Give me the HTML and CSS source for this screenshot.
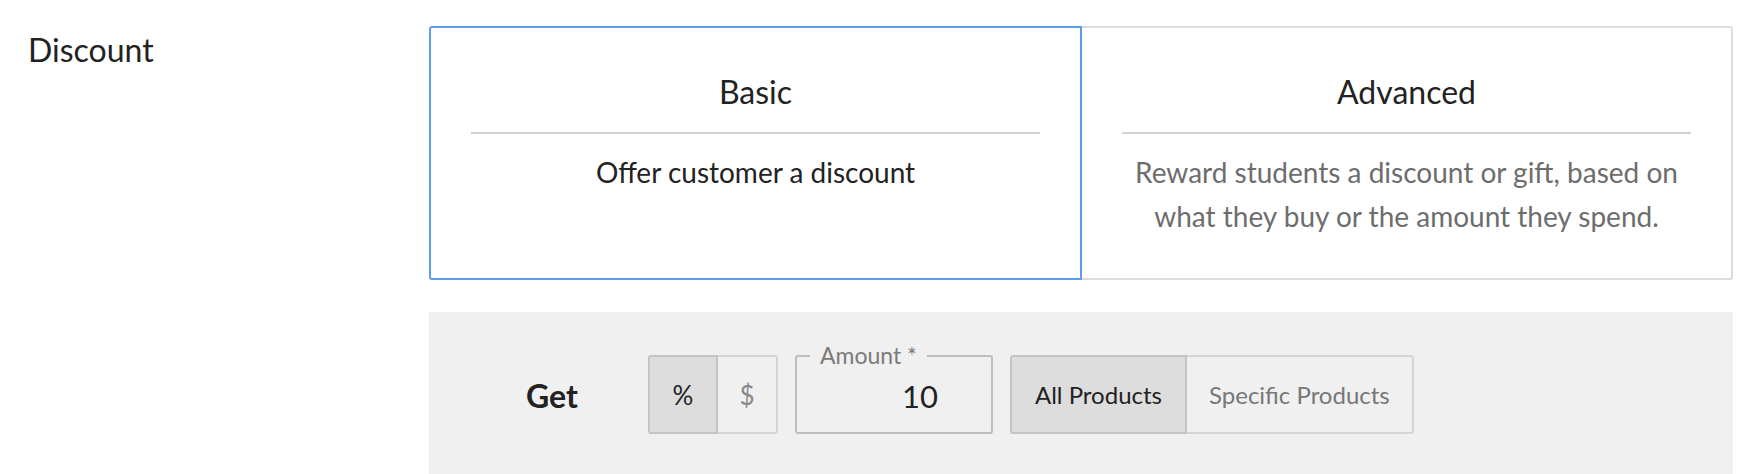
FILE: index.html
```html
<!DOCTYPE html>
<html lang="en">
<head>
<meta charset="UTF-8">
<meta name="viewport" content="width=device-width, initial-scale=1.0">
<title>Discount</title>
<link rel="stylesheet" href="styles.css">
</head>
<body>
    <div class="field-row">
        <div class="field-label">Discount</div>
        <div class="field-body">

            <!-- Discount type -->
            <div class="options">
                <div class="option selected">
                    <div class="option-title">Basic</div>
                    <div class="option-rule"></div>
                    <div class="option-desc">Offer customer a discount</div>
                </div>
                <div class="option">
                    <div class="option-title">Advanced</div>
                    <div class="option-rule"></div>
                    <div class="option-desc">Reward students a discount or gift, based on what they buy or the amount they spend.</div>
                </div>
            </div>

            <!-- Basic rule -->
            <div class="rule-panel">
                <span class="get">Get</span>
                <div class="toggle unit-toggle">
                    <button type="button" class="toggle-btn pct active">%</button>
                    <button type="button" class="toggle-btn usd">$</button>
                </div>
                <div class="amount">
                    <label for="amount">Amount *</label>
                    <input type="text" id="amount" value="10">
                </div>
                <div class="toggle scope-toggle">
                    <button type="button" class="toggle-btn active">All Products</button>
                    <button type="button" class="toggle-btn specific">Specific Products</button>
                </div>
            </div>

        </div>
    </div>
</body>
</html>
```

FILE: styles.css
```css
body {
    font-family: Lato, 'Open Sans', sans-serif;
    background-color: #fff;
    margin: 0;
    color: #222;
}

.field-row {
    display: flex;
    padding: 26px 29px 0 28px;
}

.field-label {
    width: 401px;
    flex-shrink: 0;
    padding-top: 5px;
    font-size: 32px;
    line-height: 38px;
    color: #222;
}

.field-body {
    flex: 1;
}

/* discount type cards */
.options {
    display: flex;
    margin-bottom: 32px;
}

.option {
    flex: 1 1 0;
    padding: 45px 40px 40px;
    border: 2px solid #dcdcdc;
    text-align: center;
    background-color: #fff;
}

.option:first-child {
    border-radius: 3px 0 0 3px;
}

.option:last-child {
    border-radius: 0 3px 3px 0;
}

.option + .option {
    border-left: none;
}

.option.selected {
    border-color: #5c9ded;
}

.option-title {
    font-size: 32px;
    line-height: 38px;
    color: #222;
    margin-bottom: 21px;
}

.option-rule {
    height: 2px;
    background-color: #d3d3d3;
    margin-bottom: 16px;
}

.option-desc {
    font-size: 28px;
    line-height: 44px;
    color: #6d6d6d;
}

.option.selected .option-desc {
    color: #222;
}

/* rule panel */
.rule-panel {
    display: flex;
    align-items: center;
    gap: 17px;
    background-color: #f0f0f0;
    padding: 43px 0 42px 97px;
}

.get {
    width: 105px;
    padding-top: 2px;
    font-size: 32px;
    font-weight: bold;
    color: #222;
}

.toggle {
    display: flex;
}

.toggle-btn {
    height: 79px;
    box-sizing: border-box;
    padding: 0 23px;
    font-family: Lato, 'Open Sans', sans-serif;
    font-size: 24px;
    color: #777;
    background-color: transparent;
    border: 2px solid #d5d5d5;
    border-radius: 0;
    cursor: pointer;
}

.toggle-btn:first-child {
    border-radius: 3px 0 0 3px;
}

.toggle-btn:last-child {
    border-radius: 0 3px 3px 0;
}

.toggle-btn + .toggle-btn {
    margin-left: -2px;
}

.toggle-btn.active {
    position: relative;
    z-index: 1;
    background-color: #dddddd;
    border-color: #c4c4c4;
    color: #222;
}

.scope-toggle .specific {
    padding: 0 22px;
}

.unit-toggle .toggle-btn {
    font-size: 26px;
    padding: 0;
}

.unit-toggle .pct {
    width: 70px;
}

.unit-toggle .usd {
    width: 62px;
    color: #888;
}

.amount {
    position: relative;
}

.amount label {
    position: absolute;
    left: 15px;
    top: -11px;
    padding: 0 10px;
    font-size: 23px;
    line-height: 23px;
    color: #7a7a7a;
    background-color: #f0f0f0;
}

.amount input {
    display: block;
    width: 198px;
    height: 79px;
    box-sizing: border-box;
    padding: 2px 53px 0 0;
    font-family: Lato, 'Open Sans', sans-serif;
    font-size: 31px;
    color: #222;
    text-align: right;
    background-color: transparent;
    border: 2px solid #bdbdbd;
    border-radius: 3px;
    outline: none;
}
```
